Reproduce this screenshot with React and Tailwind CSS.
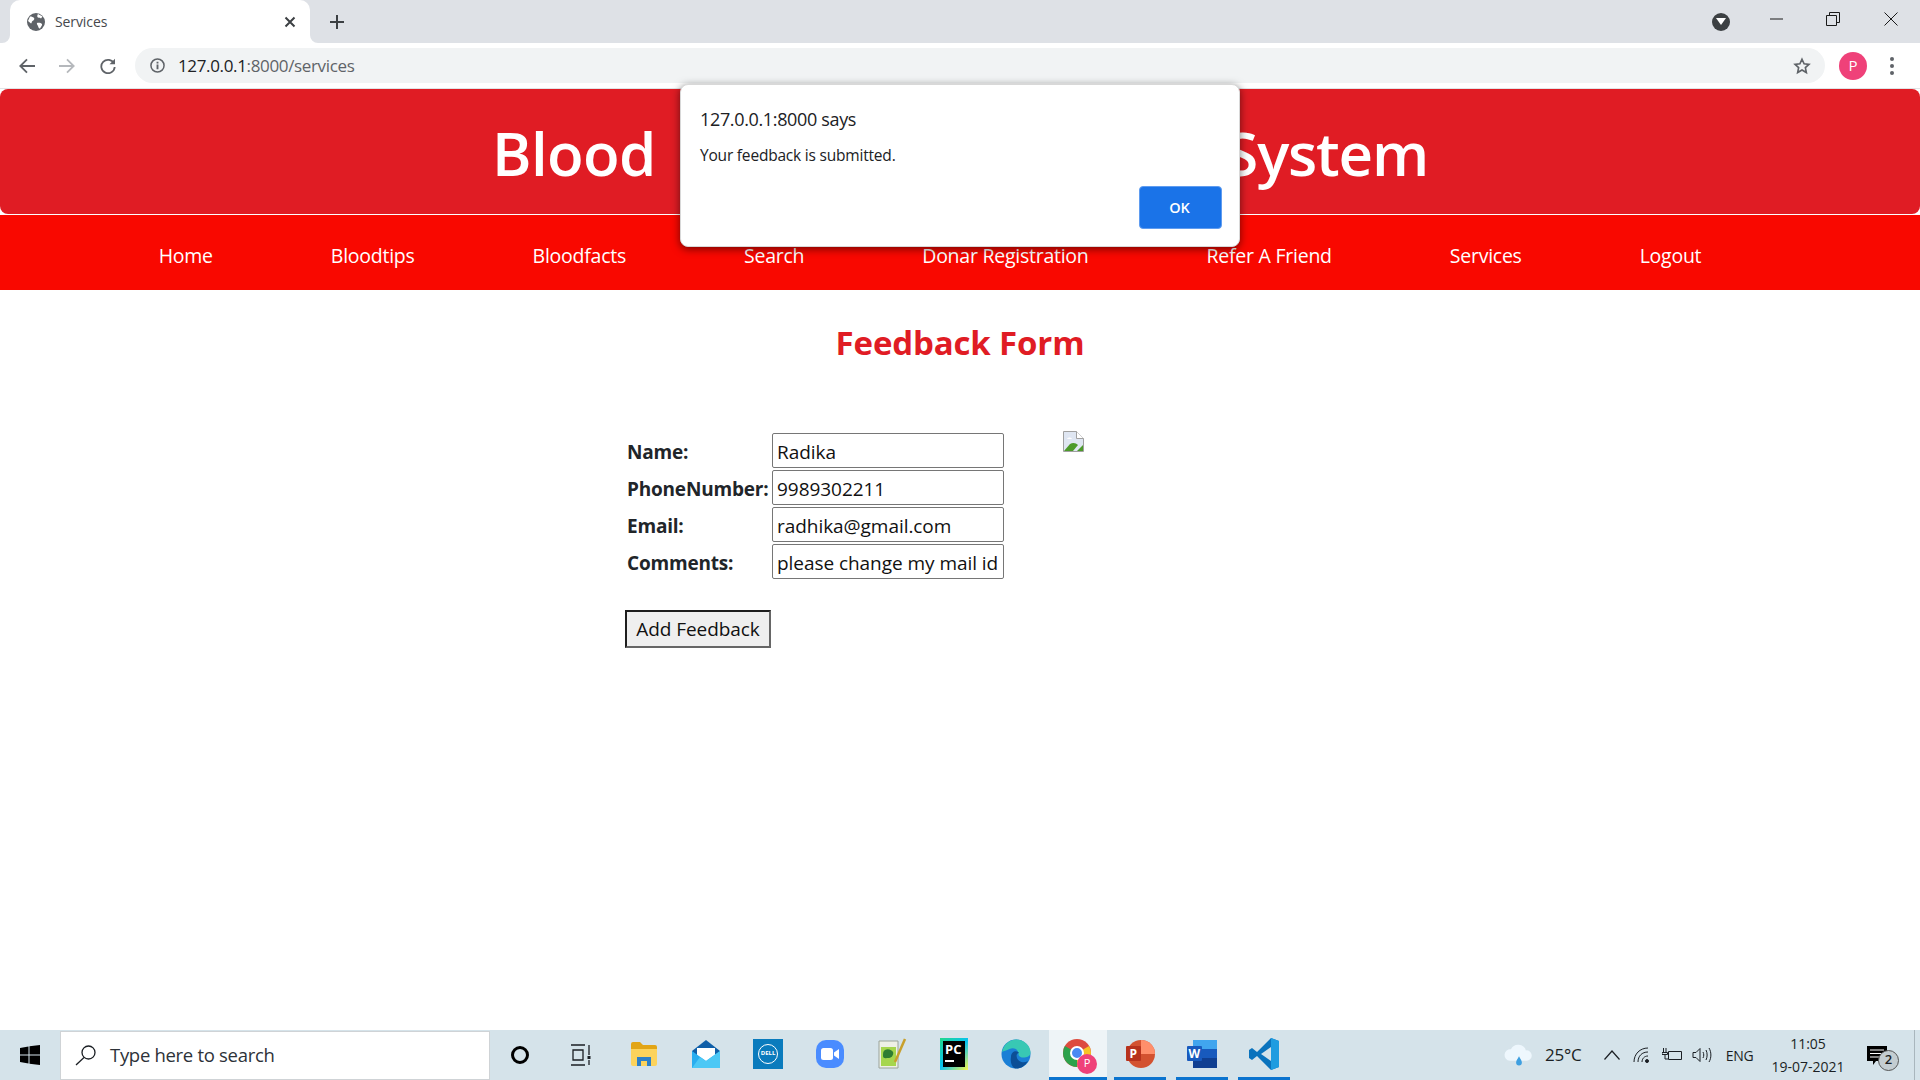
import React from "react";

const Bar = ({ children, active }) => (
  <div className="w-[62px] h-full flex flex-col">
    <div className={active ? "flex-1 flex items-center justify-center bg-[#eef4f7] mx-[2px]" : "flex-1 flex items-center justify-center"}>{children}</div>
    {active !== undefined ? <div className={active ? "h-[3px] bg-[#0b74cf] mx-[2px]" : "h-[3px] bg-[#0b74cf] mx-[5px]"} /> : <div className="h-[3px]" />}
  </div>
);

const navItems = ["Home", "Bloodtips", "Bloodfacts", "Search", "Donar Registration", "Refer A Friend", "Services", "Logout"];
const rows = [
  ["Name:", "Radika"],
  ["PhoneNumber:", "9989302211"],
  ["Email:", "radhika@gmail.com"],
  ["Comments:", "please change my mail id"],
];

function TabStrip() {
  return (
    <div className="h-[43px] bg-[#dee1e6] flex items-end pl-[10px] shrink-0">
      <div className="relative w-[300px] h-[43px] bg-white rounded-t-[10px] flex items-center">
        <svg className="absolute -left-[8px] bottom-0" width="8" height="8" viewBox="0 0 8 8"><path d="M8 0V8H0A8 8 0 0 0 8 0Z" fill="#fff" /></svg>
        <svg className="absolute -right-[8px] bottom-0" width="8" height="8" viewBox="0 0 8 8"><path d="M0 0V8H8A8 8 0 0 1 0 0Z" fill="#fff" /></svg>
        <svg className="ml-[17px]" width="18" height="18" viewBox="0 0 18 18">
          <circle cx="9" cy="9" r="9" fill="#5f6368" />
          <path d="M3 3.500c2 0 3 .5 4 1.500 1 1-.5 2.500-1.500 3-1 .5-.5 2-1.500 2.500L1 8M11 1c-1 1.500-1 3 0 3.500s2 0 3 1l1.500-2M10 10c2-.5 4 0 5 1 .5 1-1 3-2 4.500-1 .5-1.500-1-2-2.500-.5-1-1.500-2-1-3Z" fill="#fff" />
        </svg>
        <span className="ml-[10px] pb-[1px] text-[14px] text-[#45484c] tracking-[-0.1px]">Services</span>
        <svg className="ml-auto mr-[14px]" width="12" height="12" viewBox="0 0 12 12"><path d="M1.500 1.500l9 9M10.500 1.500l-9 9" stroke="#3c4043" strokeWidth="2" /></svg>
      </div>
      <div className="h-[43px] flex items-center ml-[19px]">
        <svg width="16" height="16" viewBox="0 0 16 16"><path d="M8 1v14M1 8h14" stroke="#3c4043" strokeWidth="2" /></svg>
      </div>
      <div className="ml-auto h-[43px] flex items-center">
        <div className="w-[18px] h-[18px] rounded-full bg-[#3c4043] flex items-center justify-center mr-[40px]">
          <svg width="10" height="8" viewBox="0 0 10 8"><path d="M0 0h10L5 7Z" fill="#fff" /></svg>
        </div>
        <svg className="mr-[43px] -mt-[6px]" width="13" height="2" viewBox="0 0 13 2"><path d="M0 1h13" stroke="#1a1a1a" strokeWidth="1" /></svg>
        <svg className="mr-[44px] -mt-[6px]" width="14" height="14" viewBox="0 0 14 14" fill="none" stroke="#1a1a1a"><path d="M.5 3.500h10v10H.5zM3.500 3.500V.5h10v10h-3" /></svg>
        <svg className="mr-[22px] -mt-[6px]" width="14" height="14" viewBox="0 0 14 14"><path d="M.5.5l13 13M13.500.5l-13 13" stroke="#1a1a1a" /></svg>
      </div>
    </div>
  );
}

function Toolbar() {
  return (
    <div className="h-[46px] bg-white flex items-center shrink-0 border-b border-[#e1e3e6]">
      <svg className="ml-[19px] shrink-0" width="16" height="16" viewBox="0 0 16 16" fill="none" stroke="#5f6368" strokeWidth="1.800"><path d="M16 8H1.500M8 1.300L1.300 8 8 14.700" /></svg>
      <svg className="ml-[24px] shrink-0" width="16" height="16" viewBox="0 0 16 16" fill="none" stroke="#b5b8bc" strokeWidth="1.800"><path d="M0 8h14.500M8 1.300L14.700 8 8 14.700" /></svg>
      <svg className="ml-[25px] shrink-0" width="16" height="16" viewBox="0 0 16 16" fill="none" stroke="#5f6368" strokeWidth="1.800"><path d="M14 5.500A6.700 6.700 0 1 0 14.700 9" /><path d="M15 .8v5.500H9.500" fill="#5f6368" stroke="none" /></svg>
      <div className="ml-[19px] w-[1690px] shrink-0 h-[35px] rounded-full bg-[#f1f3f4] flex items-center">
        <svg className="ml-[15px]" width="15" height="15" viewBox="0 0 16 16" fill="none" stroke="#5f6368" strokeWidth="1.600"><circle cx="8" cy="8" r="7" /><path d="M8 7v5M8 4v1.800" strokeWidth="2" /></svg>
        <span className="ml-[13px] text-[17px] tracking-[-0.35px] text-[#202124]">127.0.0.1<span className="text-[#5f6368]">:8000/services</span></span>
        <svg className="ml-auto mr-[14px]" width="18" height="18" viewBox="0 0 24 24" fill="none" stroke="#5f6368" strokeWidth="2.200"><path d="M12 3l2.800 6 6.500.8-4.800 4.400 1.300 6.500L12 17.400l-5.800 3.300 1.300-6.500L2.700 9.800 9.200 9Z" /></svg>
      </div>
      <div className="ml-[14px] w-[28px] h-[28px] shrink-0 rounded-full bg-[#ef4179] text-white text-[15px] flex items-center justify-center">P</div>
      <svg className="ml-[22px] shrink-0" width="6" height="20" viewBox="0 0 6 20" fill="#5f6368"><circle cx="3" cy="3" r="2" /><circle cx="3" cy="10" r="2" /><circle cx="3" cy="17" r="2" /></svg>
    </div>
  );
}

function Taskbar() {
  return (
    <div className="h-[50px] bg-[#d5e3ea] flex items-center shrink-0 text-[#1b1f24]">
      <div className="w-[60px] flex justify-center">
        <svg width="20" height="20" viewBox="0 0 20 20" fill="#000"><path d="M0 3l8.500-1.500V9.500H0zM9.500 1.300L20 0v9.500H9.500zM0 10.500h8.500v8L0 17zM9.500 10.500H20V20L9.500 18.700z" /></svg>
      </div>
      <div className="w-[430px] h-[49px] bg-white border border-[#cfd3d6] flex items-center">
        <svg className="ml-[14px]" width="22" height="22" viewBox="0 0 22 22" fill="none" stroke="#1b1f24" strokeWidth="1.300"><circle cx="13.500" cy="8.500" r="6.500" /><path d="M9 13.500L1 21" /></svg>
        <span className="ml-[13px] text-[18.500px] tracking-[-0.3px] text-[#2d3238]">Type here to search</span>
      </div>
      <div className="w-[60px] flex justify-center">
        <div className="w-[18px] h-[18px] rounded-full border-[3px] border-black" />
      </div>
      <div className="w-[63px] flex justify-center">
        <svg className="-ml-[2px]" width="22" height="22" viewBox="0 0 22 22" fill="none" stroke="#1b1f24" strokeWidth="1.300"><path d="M1 1h14M1 21h14M3 6h10v10H3zM19 1v10M19 16v5" /><path d="M19 12v3" strokeWidth="3" /></svg>
      </div>
      <div className="flex h-full items-stretch">
        <Bar>
          <svg width="28" height="28" viewBox="0 0 28 28"><path d="M1 4a2 2 0 0 1 2-2h7l3 3h12a2 2 0 0 1 2 2v4H1z" fill="#e2a516" /><path d="M1 9h26v15a2 2 0 0 1-2 2H3a2 2 0 0 1-2-2z" fill="#fcd35c" /><path d="M7 17h14v9h-4v-5h-6v5H7z" fill="#2d80c8" /></svg>
        </Bar>
        <Bar>
          <svg width="30" height="30" viewBox="0 0 30 30"><path d="M15 1L1 12v17h28V12Z" fill="#0f5fa8" /><path d="M6 9h18v9l-9 6-9-6z" fill="#fff" /><path d="M1 12l14 10 14-10v17H1z" fill="#29aef0" /><path d="M15 22l14-10v17H1l8-11z" fill="#4cc8f5" /></svg>
        </Bar>
        <Bar>
          <div className="w-[30px] h-[30px] bg-[#0a7bbd] flex items-center justify-center">
            <div className="w-[20px] h-[20px] rounded-full border border-white text-white text-[6px] font-bold flex items-center justify-center">DELL</div>
          </div>
        </Bar>
        <Bar>
          <div className="w-[28px] h-[28px] rounded-[10px] bg-[#4a8cff] flex items-center justify-center">
            <svg width="18" height="12" viewBox="0 0 18 12" fill="#fff"><rect width="12" height="12" rx="2.500" /><path d="M13 4.500L18 1v10l-5-3.500z" /></svg>
          </div>
        </Bar>
        <Bar>
          <svg width="30" height="32" viewBox="0 0 30 32"><path d="M2 3h19v27H2z" fill="#eef0e6" stroke="#9aa39a" /><path d="M4 9h15v19H4z" fill="#a6d64e" /><path d="M8 12c3-2 7 0 8 2s-1 6-4 6-6 1-6-2 0-5 2-6z" fill="#2f7d32" /><path d="M18 24L28 1" stroke="#c8a02c" strokeWidth="2.500" /></svg>
        </Bar>
        <Bar>
          <div className="w-[28px] h-[32px] bg-[linear-gradient(135deg,#21d789,#07c3f2_50%,#fcf84a)] flex items-center justify-center">
            <div className="w-[22px] h-[26px] bg-black text-white text-[13px] font-bold leading-[16px] pl-[2px] flex flex-col">
              <span>PC</span>
              <span className="w-[9px] h-[2px] bg-white mt-[3px]" />
            </div>
          </div>
        </Bar>
        <Bar>
          <svg width="30" height="30" viewBox="0 0 30 30"><circle cx="15" cy="15" r="14.500" fill="#1a7fd6" /><path d="M1 13C3 4 10 .5 15 .5c8 0 14.500 6 14.500 13 0 4-4 5-7 5-4 0-5-2-5-3.500 0-5-5-7-9-5-3 1.500-6 2-7.500 3z" fill="#38c8b4" /><path d="M10 18c0-6 6-7 8-4-2 0-3 2-2 5s6 6 11 3c-3 5-7 7.500-12 7.500-4 0-6-7-5-11.500z" fill="#0c4f96" /></svg>
        </Bar>
        <Bar active>
          <div className="relative w-[30px] h-[30px]">
            <svg width="30" height="30" viewBox="0 0 30 30"><circle cx="14" cy="14" r="14" fill="#dd4b3e" /><path d="M14 14L26.100 7A14 14 0 0 1 14 28z" fill="#f7c325" /><path d="M14 14v14A14 14 0 0 1 1.900 7z" fill="#2ca24c" /><circle cx="14" cy="14" r="6" fill="#4a89f3" stroke="#fff" strokeWidth="2" /></svg>
            <div className="absolute -right-[4px] -bottom-[5px] w-[20px] h-[20px] rounded-full bg-[#ef4179] text-white text-[11px] flex items-center justify-center">P</div>
          </div>
        </Bar>
        <Bar active={false}>
          <svg width="30" height="30" viewBox="0 0 30 30"><circle cx="16" cy="15" r="14" fill="#d35230" /><path d="M16 1a14 14 0 0 1 14 14H16z" fill="#ff8f6b" /><rect x="1" y="7" width="15" height="15" rx="1" fill="#b7321c" /><text x="4.500" y="19" fill="#fff" fontSize="12" fontWeight="700">P</text></svg>
        </Bar>
        <Bar active={false}>
          <svg width="30" height="30" viewBox="0 0 30 30"><rect x="6" y="1" width="24" height="28" rx="1" fill="#2b7cd3" /><path d="M6 10h24v9H6z" fill="#185abd" /><path d="M6 1h24v9H6z" fill="#41a5ee" /><path d="M6 19h24v10H6z" fill="#103f91" /><rect x="0" y="7" width="15" height="15" rx="1" fill="#185abd" /><text x="1.500" y="19" fill="#fff" fontSize="12" fontWeight="700">W</text></svg>
        </Bar>
        <Bar active={false}>
          <svg width="30" height="32" viewBox="0 0 30 32"><path d="M22 0L8 14 3 10 0 12v8l3 2 5-4 14 14 8-3V3z" fill="#0a73bd" /><path d="M22 0l8 3v26l-8 3z" fill="#1f9ce0" /><path d="M22 9L12 16l10 7z" fill="#d5e3ea" /></svg>
        </Bar>
      </div>
      <div className="ml-auto flex items-center h-full">
        <div className="w-[44px] flex justify-center">
          <svg width="30" height="24" viewBox="0 0 26 20"><path d="M5 15a5 5 0 0 1 1-10 7 7 0 0 1 13 1 4.500 4.500 0 0 1 1 9z" fill="#eef7fd" /><path d="M13 11c1 2 2.500 3.500 2.500 5.500a2.500 2.500 0 0 1-5 0c0-2 1.500-3.500 2.500-5.500z" fill="#3e9fe0" /></svg>
        </div>
        <div className="w-[56px] pl-[4px] text-[17px] tracking-[-0.2px]">25°C</div>
        <div className="w-[30px] flex justify-center">
          <svg width="16" height="10" viewBox="0 0 16 10" fill="none" stroke="#1b1f24" strokeWidth="1.200"><path d="M.5 9.500L8 1l7.500 8.500" /></svg>
        </div>
        <div className="w-[30px] flex justify-center">
          <svg width="18" height="16" viewBox="0 0 18 16" fill="none" stroke="#1b1f24"><path d="M1 15C1 7 7 1 15 1M5 15c0-6 4-10 10-10M9 15c0-3 2-6 6-6" /><circle cx="14" cy="14" r="1.500" fill="#1b1f24" /></svg>
        </div>
        <div className="w-[30px] flex justify-center">
          <svg width="20" height="14" viewBox="0 0 20 14" fill="none" stroke="#1b1f24"><path d="M6.500 3.500h13v8h-13zM4 0v4M1.500 0v4M0 4.500h5.500v2h-5.500zM3 7v4h3" /></svg>
        </div>
        <div className="w-[30px] flex justify-center">
          <svg width="20" height="16" viewBox="0 0 20 16" fill="none" stroke="#1b1f24"><path d="M1 5.500h3L8 1.500v13l-4-4H1zM11 5c1 2 1 4 0 6M14 3c1.500 3 1.500 7 0 10M17 1c2.500 4 2.500 10 0 14" /></svg>
        </div>
        <div className="w-[45px] text-center text-[14px] tracking-[-0.3px]">ENG</div>
        <div className="w-[92px] text-center text-[14px] tracking-[0px] leading-[23px]">
          <div>11:05</div>
          <div>19-07-2021</div>
        </div>
        <div className="w-[50px] relative flex justify-center">
          <svg className="-ml-[5px]" width="20" height="19" viewBox="0 0 20 19"><path d="M0 0h20v15H9l-3 4v-4H0z" fill="#000" /><path d="M3 4h14M3 7.500h14M3 11h14" stroke="#fff" /></svg>
          <div className="absolute left-[24px] top-[4px] w-[21px] h-[21px] rounded-full bg-[#c4cdd1] border border-[#555] text-[13px] font-semibold flex items-center justify-center">2</div>
        </div>
        <div className="w-[16px] h-full flex justify-start pl-[10px]"><div className="w-px h-full bg-[#a9b6bd]" /></div>
      </div>
    </div>
  );
}

export default function App() {
  return (
    <div className="relative h-screen w-full flex flex-col overflow-hidden bg-white font-['Open_Sans',sans-serif]">
      <TabStrip />
      <Toolbar />
      <header className="h-[125px] shrink-0 bg-[#e01c24] rounded-lg flex justify-center items-center">
        <div className="w-[936px] flex justify-between text-white font-semibold text-[60px] leading-none tracking-[-0.6px] pt-[3px]">
          <span>Blood</span>
          <span className="tracking-[-1.2px]">System</span>
        </div>
      </header>
      <nav className="mt-[1px] h-[75px] shrink-0 bg-[#f90800] flex items-center justify-center gap-[118px] text-white text-[19.500px] tracking-[-0.25px] pt-[6px] pr-[60px]">
        {navItems.map((n) => <a key={n}>{n}</a>)}
      </nav>
      <main className="flex-1">
        <h1 className="mt-[32px] text-center font-bold text-[33px] leading-[42px] tracking-[-0.15px] text-[#e01c24]">Feedback Form</h1>
        <div className="mt-[69px] ml-[625px] flex items-start">
          <form className="w-[379px]">
            <div className="grid grid-cols-[147px_232px] gap-y-[2px]">
              {rows.map(([l, v]) => (
                <React.Fragment key={l}>
                  <label className="pl-[2px] h-[35px] flex items-center pt-[3px] font-bold text-[19px] tracking-[-0.2px] text-[#212529]">{l}</label>
                  <input readOnly value={v} className="h-[35px] w-[232px] border border-[#767676] rounded-[2px] px-[4px] pt-[2px] text-[19px] tracking-[-0.05px] text-[#111] outline-none" />
                </React.Fragment>
              ))}
            </div>
            <button type="button" className="mt-[31px] w-[146px] h-[38px] bg-[#efefef] border-2 border-t-[#1e1e1e] border-l-[#1e1e1e] border-r-[#666] border-b-[#666] text-[19px] tracking-[-0.05px] text-[#111] flex items-center justify-center">Add Feedback</button>
          </form>
          <svg className="ml-[59px] -mt-[2px]" width="21" height="21" viewBox="0 0 21 21">
            <path d="M.5.5h13l7 7v13H.5z" fill="#dfe6f2" stroke="#a0a0a0" />
            <path d="M13.500.5v7h7" fill="#fff" stroke="#a0a0a0" />
            <path d="M1 20l6-7c3-2 6-1 8 1l-5 6z" fill="#4c9a2a" />
            <path d="M14 20l6-6v6z" fill="#4c9a2a" />
            <path d="M4 8c1-2 4-2 5 0z" fill="#fff" />
          </svg>
        </div>
      </main>
      <Taskbar />
      <div className="absolute left-[680px] top-[84px] w-[560px] h-[163px] bg-white rounded-lg border border-[#d8d8d8] shadow-[0_2px_8px_rgba(0,0,0,0.55)] text-[#202124] pl-[19px]">
        <div className="mt-[22px] text-[18px] leading-[24px] tracking-[-0.35px]">127.0.0.1:8000 says</div>
        <div className="mt-[14px] text-[15.500px] leading-[20px] tracking-[-0.2px]">Your feedback is submitted.</div>
        <div className="absolute left-[458px] top-[101px] w-[83px] h-[43px] pr-[2px] rounded-[4px] bg-[#1a73e8] border border-[#5f9cf0] text-white text-[14.500px] font-semibold flex items-center justify-center">OK</div>
      </div>
    </div>
  );
}
